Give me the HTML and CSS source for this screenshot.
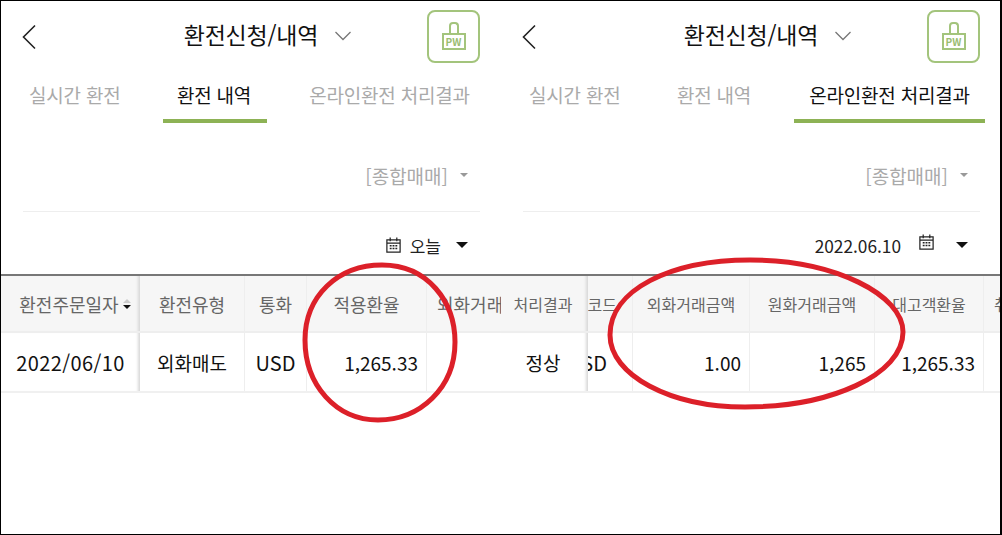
FILE: index.html
```html
<!DOCTYPE html>
<html lang="ko">
<head>
    <meta charset="UTF-8">
    <meta name="viewport" content="width=device-width, initial-scale=1.0">
    <title>환전신청/내역</title>
    <link rel="stylesheet" href="styles.css">
</head>
<body>
    <div class="shot">
        <section class="phone">
            <header class="top">
                <svg class="back" width="16" height="26" viewBox="0 0 16 26"><path d="M14 1.5 2.5 13 14 24.5" fill="none" stroke="#222" stroke-width="1.6"/></svg>
                <h1>환전신청/내역</h1>
                <svg class="drop" width="18" height="10" viewBox="0 0 18 10"><path d="M1.5 1 9 8.5 16.5 1" fill="none" stroke="#777" stroke-width="1.3"/></svg>
                <div class="pw">
                    <div class="lock"></div>
                    <div class="pw-body">PW</div>
                </div>
            </header>
            <nav class="tabs">
                <a class="tab tab-a">실시간 환전</a>
                <a class="tab tab-b on">환전 내역</a>
                <a class="tab tab-c">온라인환전 처리결과</a>
            </nav>
            <div class="filter"><span>[종합매매]</span><i class="caret grey"></i></div>
            <div class="dates">
                <svg class="cal" width="17" height="18" viewBox="0 0 18 18"><use href="#cal"/></svg>
                <span class="date-text">오늘</span>
                <i class="caret"></i>
            </div>
            <div class="grid left-grid">
                <div class="row head">
                    <div class="cell pin first">환전주문일자<span class="sort"><i></i><i></i></span></div>
                    <div class="cell">환전유형</div>
                    <div class="cell">통화</div>
                    <div class="cell">적용환율</div>
                    <div class="cell clip">외화거래금액</div>
                </div>
                <div class="row body">
                    <div class="cell pin day">2022/06/10</div>
                    <div class="cell kr">외화매도</div>
                    <div class="cell">USD</div>
                    <div class="cell num">1,265.33</div>
                    <div class="cell"></div>
                </div>
            </div>
        </section>
        <section class="phone second">
            <header class="top">
                <svg class="back" width="16" height="26" viewBox="0 0 16 26"><path d="M14 1.5 2.5 13 14 24.5" fill="none" stroke="#222" stroke-width="1.6"/></svg>
                <h1>환전신청/내역</h1>
                <svg class="drop" width="18" height="10" viewBox="0 0 18 10"><path d="M1.5 1 9 8.5 16.5 1" fill="none" stroke="#777" stroke-width="1.3"/></svg>
                <div class="pw">
                    <div class="lock"></div>
                    <div class="pw-body">PW</div>
                </div>
            </header>
            <nav class="tabs">
                <a class="tab tab-a">실시간 환전</a>
                <a class="tab tab-b">환전 내역</a>
                <a class="tab tab-c on">온라인환전 처리결과</a>
            </nav>
            <div class="filter"><span>[종합매매]</span><i class="caret grey"></i></div>
            <div class="dates">
                <span class="date-text">2022.06.10</span>
                <svg class="cal" width="17" height="18" viewBox="0 0 18 18"><use href="#cal"/></svg>
                <i class="caret"></i>
            </div>
            <div class="grid right-grid">
                <div class="row head">
                    <div class="cell pin">처리결과</div>
                    <div class="cell cut">통화코드</div>
                    <div class="cell">외화거래금액</div>
                    <div class="cell">원화거래금액</div>
                    <div class="cell">대고객환율</div>
                    <div class="cell clip">취소</div>
                </div>
                <div class="row body">
                    <div class="cell pin kr">정상</div>
                    <div class="cell cut">USD</div>
                    <div class="cell num">1.00</div>
                    <div class="cell num">1,265</div>
                    <div class="cell num">1,265.33</div>
                    <div class="cell"></div>
                </div>
            </div>
        </section>

        <!-- red pen marks drawn on top of the capture -->
        <svg class="marks" width="1002" height="535" viewBox="0 0 1002 535">
            <path d="M382 265C428 265 455 302 455 342C455 388 420 420 378 420C336 420 305 385 305 340C305 296 338 265 382 265Z"/>
            <path d="M750 260C835 260 903 295 903 332C903 375 830 407 745 407C670 407 610 375 610 335C610 290 670 260 750 260Z"/>
        </svg>

        <svg class="defs" width="0" height="0">
            <symbol id="cal" viewBox="0 0 18 18">
                <path d="M2 3.500h14v13H2zM2 7h14M5.500 1v4M12.500 1v4" fill="none" stroke="#222" stroke-width="1.3"/>
                <path d="M5 9h2v1.500H5zM8 9h2v1.500H8zM11 9h2v1.500h-2zM5 12h2v1.500H5zM8 12h2v1.500H8zM11 12h2v1.500h-2z" fill="#222"/>
            </symbol>
        </svg>
    </div>
</body>
</html>
```

FILE: styles.css
```css
* {
    margin: 0;
    padding: 0;
    box-sizing: border-box;
}
body {
    background: #fff;
    font-family: "Noto Sans CJK KR", "Noto Sans", sans-serif;
    color: #222;
}
.shot {
    position: relative;
    display: flex;
    width: 1002px;
    height: 535px;
    overflow: hidden;
    border: 1px solid #000;
    border-right-width: 2px;
}
.phone {
    flex: none;
    width: 500px;
    height: 100%;
    overflow: hidden;
}

/* header */
.top {
    position: relative;
    display: flex;
    justify-content: center;
    height: 70px;
}
.top h1 {
    font-size: 23px;
    font-weight: 400;
    line-height: 67px;
    color: #111;
    letter-spacing: -0.2px;
}
.back {
    position: absolute;
    left: 20px;
    top: 23px;
}
.drop {
    position: absolute;
    left: 333px;
    top: 30px;
}
.pw {
    position: absolute;
    left: 426px;
    top: 9px;
    width: 53px;
    height: 53px;
    border: 2px solid #a3c47c;
    border-radius: 8px;
}
.lock {
    width: 10px;
    height: 11px;
    margin: 10px auto 0;
    border: 2px solid #a3c47c;
    border-bottom: none;
    border-radius: 4px 4px 0 0;
}
.pw-body {
    width: 24px;
    height: 17px;
    margin: 0 auto;
    border: 2px solid #a3c47c;
    font-size: 10px;
    font-weight: 700;
    line-height: 13px;
    text-align: center;
    color: #9bbd72;
}

/* tabs */
.tabs {
    display: flex;
    height: 52px;
}
.tab {
    flex: none;
    height: 52px;
    font-size: 19px;
    line-height: 48px;
    text-align: center;
    color: #aaa;
    white-space: nowrap;
    letter-spacing: -0.2px;
}
.tab-a {
    width: 162px;
    padding: 0 46px 0 28px;
}
.tab-b {
    width: 104px;
    padding-right: 2px;
}
.tab-c {
    width: 191px;
    margin-left: 27px;
}
.tab.on {
    color: #111;
    border-bottom: 4px solid #8db255;
}

/* filter rows */
.filter {
    display: flex;
    align-items: center;
    justify-content: flex-end;
    gap: 12px;
    height: 89px;
    margin: 0 21px 0 22px;
    padding: 16px 12px 0 0;
    border-bottom: 1px solid #eee;
    font-size: 19px;
    color: #aaa;
}
.dates {
    display: flex;
    align-items: center;
    justify-content: flex-end;
    height: 62px;
    padding: 4px 33px 0 0;
    font-size: 17px;
    color: #222;
}
.date-text {
    margin-left: 8px;
}
.second .dates {
    font-size: 17.3px;
}
.second .cal {
    margin: 0 0 6px 17px;
}
.caret {
    display: block;
    width: 0;
    height: 0;
    margin-left: 15px;
    border-left: 6px solid transparent;
    border-right: 6px solid transparent;
    border-top: 6px solid #111;
}
.second .caret {
    margin-left: 21px;
}
.filter .caret,
.second .filter .caret {
    margin-left: 0;
    border-left-width: 4px;
    border-right-width: 4px;
    border-top: 4px solid #999;
}
.cal {
    flex: none;
}

/* grid */
.grid {
    border-top: 2px solid #777;
    border-bottom: 2px solid #f0f0f0;
}
.row {
    display: grid;
}
.left-grid .row {
    grid-template-columns: 139px 105px 62px 120px 110px;
}
.right-grid .row {
    grid-template-columns: 87px 45px 117px 125px 109px 60px;
}
.cell {
    display: flex;
    align-items: center;
    justify-content: center;
    overflow: hidden;
    white-space: nowrap;
    border-right: 1px solid #eee;
}
.head {
    height: 57px;
    background: #f6f6f6;
    border-bottom: 2px solid #eee;
    font-size: 16px;
    color: #666;
}
.left-grid .head {
    font-size: 18px;
}
.body {
    height: 58px;
    font-size: 20px;
    color: #111;
}
.body .kr {
    font-size: 19px;
}
.pin {
    border-right: none;
    box-shadow: inset -4px 0 3px -2px #d8d8d8;
    padding-right: 3px;
}
.first {
    padding-left: 12px;
}
.day {
    padding-right: 0;
    letter-spacing: 0.4px;
}
.body .num {
    justify-content: flex-end;
    padding-right: 8px;
    font-size: 19px;
}
.clip {
    justify-content: flex-start;
    padding-left: 10px;
    border-right: none;
}
.head .cut {
    justify-content: flex-end;
    padding-right: 15px;
}
.body .cut {
    justify-content: flex-end;
    padding-right: 25px;
}
.sort {
    display: inline-block;
    width: 8px;
    margin-left: 4px;
}
.sort i {
    display: block;
    width: 0;
    height: 0;
    border-left: 4px solid transparent;
    border-right: 4px solid transparent;
}
.sort i:first-child {
    border-bottom: 4px solid #ccc;
    margin-bottom: 2px;
}
.sort i:last-child {
    border-top: 4px solid #111;
}

/* annotation */
.marks {
    position: absolute;
    left: -1px;
    top: -1px;
    pointer-events: none;
}
.marks path {
    fill: none;
    stroke: #dc2029;
    stroke-width: 5;
}
.defs {
    position: absolute;
}
```
